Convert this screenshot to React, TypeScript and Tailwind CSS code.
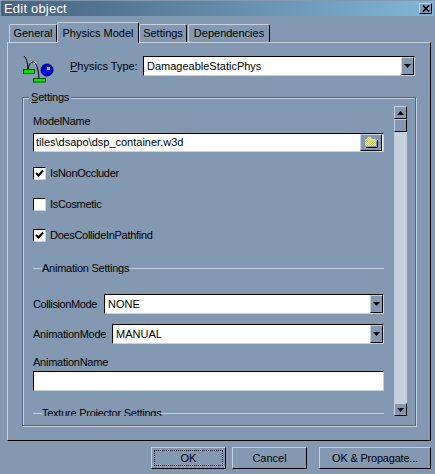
const face = "bg-[#8299b1]";

const raised = "border border-t-[#c5d1dc] border-l-[#c5d1dc] border-r-black border-b-black";
const sunken = "border border-t-black border-l-black border-r-[#c5d1dc] border-b-[#c5d1dc]";

const Arrow = ({ up = false }: { up?: boolean }) => (
  <svg width="7" height="4" viewBox="0 0 7 4" className="block">
    <path d={up ? "M3.5 0 L7 4 L0 4 Z" : "M0 0 L7 0 L3.5 4 Z"} fill="#000" />
  </svg>
);

const ScrollBtn = ({ up = false }: { up?: boolean }) => (
  <div className={`${raised} ${face} w-[13px] h-[13px] flex items-center justify-center`}>
    <Arrow up={up} />
  </div>
);

const Combo = ({ value, className }: { value: string; className: string }) => (
  <div className={`${sunken} bg-white h-[20px] flex items-center ${className}`}>
    <span className="flex-1 pl-[3px] text-black">{value}</span>
    <div className={`${raised} ${face} w-[13px] h-[18px] flex items-center justify-center`}>
      <Arrow />
    </div>
  </div>
);

const Check = ({ label, checked, className }: { label: string; checked?: boolean; className: string }) => (
  <div className={`flex items-center h-[13px] ${className}`}>
    <div className={`${sunken} bg-white w-[13px] h-[13px] flex items-center justify-center`}>
      {checked && (
        <svg width="9" height="9" viewBox="0 0 9 9" className="block">
          <path d="M1 4 L3.5 6.5 L8 1.5" fill="none" stroke="#000" strokeWidth="2" />
        </svg>
      )}
    </div>
    <span className="ml-[4px] tracking-[-0.3px]">{label}</span>
  </div>
);

const Separator = ({ label, className }: { label: string; className: string }) => (
  <div className={`flex items-center ${className}`}>
    <div className="w-[9px] h-px bg-[#c5d1dc]" />
    <span className="leading-[13px] tracking-[-0.25px]">{label}</span>
    <div className="flex-1 h-px bg-[#c5d1dc]" />
  </div>
);

const Button = ({ label, className, focused }: { label: string; className: string; focused?: boolean }) => (
  <div className={`${raised} h-[22px] flex items-center justify-center relative ${className}`}>
    {focused && <div className="absolute inset-[2px] border border-dotted border-black" />}
    {label}
  </div>
);

const Tab = ({ label, active, className }: { label: string; active?: boolean; className: string }) => (
  <div
    className={`border-t border-l border-r border-t-[#c5d1dc] border-l-[#c5d1dc] border-r-black rounded-t-[2px] flex items-center justify-center ${
      active ? "h-[21px] -mb-px z-10 bg-[#8299b1]" : "h-[18px]"
    } ${className}`}
  >
    {label}
  </div>
);

const PhysIcon = () => (
  <svg width="32" height="30" viewBox="0 0 32 30" className="block shrink-0">
    <path d="M2 0 Q5.5 3 6 13 M6 13 Q8 5 12 6 Q16 8 17 22" fill="none" stroke="#000" />
    <rect x="1.5" y="13.5" width="11" height="4" fill="#00e800" stroke="#005000" />
    <rect x="11.5" y="22.5" width="12" height="3.5" fill="#00e800" stroke="#005000" />
    <circle cx="25" cy="14" r="6" fill="#0000d8" stroke="#000070" />
    <rect x="25" y="11" width="3" height="3" fill="#40e0ff" />
  </svg>
);

const FolderIcon = () => (
  <svg width="13" height="11" viewBox="0 0 13 11" className="block">
    <defs>
      <pattern id="dither" width="2" height="2" patternUnits="userSpaceOnUse">
        <rect width="2" height="2" fill="#ffff00" />
        <rect width="1" height="1" fill="#c8c860" />
        <rect x="1" y="1" width="1" height="1" fill="#c8c860" />
      </pattern>
    </defs>
    <path d="M0 2 H2 L3 0 H6 L7 2 H11 V9 H0 Z" fill="url(#dither)" />
    <path d="M12.5 3 V10.5 H1" fill="none" stroke="#000" />
  </svg>
);

export default function App() {
  return (
    <div className={`w-[435px] h-[474px] overflow-hidden ${face} flex flex-col text-[11px] leading-[13px] text-black font-['Liberation_Sans',Arial,sans-serif]`}>
      <div className="h-[15px] mx-px mt-px bg-gradient-to-r from-[#47627d] to-[#80b6d6] flex items-center justify-between pl-[3px] pr-[2px]">
        <span className="text-white text-[13px] tracking-[0.2px]">Edit object</span>
        <div className={`${raised} ${face} w-[13px] h-[11px] flex items-center justify-center`}>
          <svg width="8" height="7" viewBox="0 0 8 7" className="block">
            <path d="M1 0.5 L7 6.5 M7 0.5 L1 6.5" stroke="#000" strokeWidth="1.6" />
          </svg>
        </div>
      </div>

      <div className="flex items-end h-[20px] mt-[6px] ml-[9px] relative">
        <Tab label="General" className="w-[48px]" />
        <Tab label="Physics Model" active className="w-[82px]" />
        <Tab label="Settings" className="w-[48px]" />
        <Tab label="Dependencies" className="w-[82px] ml-px" />
      </div>

      <div className={`${raised} ml-[7px] w-[424px] h-[399px] pt-[13px] pl-[14px] flex flex-col`}>
        <div className="flex items-start h-[28px]">
          <PhysIcon />
          <span className="ml-[16px] mt-[4px] w-[66px] whitespace-nowrap">
            <span className="underline">P</span>hysics Type:
          </span>
          <Combo value="DamageableStaticPhys" className="ml-[7px] w-[272px]" />
        </div>

        <div className="relative mt-[13px] w-[394px] h-[329px] border border-[#4f6780] shadow-[inset_1px_1px_0_#c5d1dc,1px_1px_0_#c5d1dc] flex">
          <div className={`absolute -top-[7px] left-[6px] px-[2px] tracking-[-0.2px] ${face}`}>
            <span className="underline">S</span>ettings
          </div>

          <div className="w-[361px] ml-[10px] mt-[17px] mb-[9px] overflow-hidden flex flex-col">
            <div className="tracking-[-0.2px]">ModelName</div>
            <div className={`${sunken} mt-[5px] w-[351px] h-[19px] bg-white flex items-center`}>
              <span className="flex-1 pl-[2px]">tiles\dsapo\dsp_container.w3d</span>
              <div className={`${raised} ${face} w-[22px] h-[17px] mr-px flex items-center justify-center`}>
                <FolderIcon />
              </div>
            </div>
            <Check label="IsNonOccluder" checked className="mt-[15px]" />
            <Check label="IsCosmetic" className="mt-[18px]" />
            <Check label="DoesCollideInPathfind" checked className="mt-[18px]" />
            <Separator label="Animation Settings" className="mt-[20px] w-[351px]" />
            <div className="flex items-center mt-[19px] w-[351px]">
              <span className="w-[71px] tracking-[-0.4px]">CollisionMode</span>
              <Combo value="NONE" className="flex-1" />
            </div>
            <div className="flex items-center mt-[10px] w-[351px]">
              <span className="w-[79px] tracking-[-0.25px]">AnimationMode</span>
              <Combo value="MANUAL" className="flex-1" />
            </div>
            <div className="mt-[12px] tracking-[-0.25px]">AnimationName</div>
            <div className={`${sunken} mt-[2px] w-[351px] h-[20px] bg-white shrink-0`} />
            <Separator label="Texture Projector Settings" className="mt-[16px] w-[351px] shrink-0" />
          </div>

          <div className="mt-[8px] w-[13px] h-[310px] flex flex-col">
            <ScrollBtn up />
            <div className={`${raised} ${face} w-[13px] h-[13px]`} />
            <div className="flex-1 bg-[#c5d1dc]" />
            <ScrollBtn />
          </div>
        </div>
      </div>

      <div className="flex mt-[6px]">
        <Button label="OK" focused className="ml-[151px] w-[75px]" />
        <Button label="Cancel" className="ml-[6px] w-[75px]" />
        <Button label="OK & Propagate..." className="ml-[12px] w-[112px] tracking-[-0.2px]" />
      </div>
    </div>
  );
}
